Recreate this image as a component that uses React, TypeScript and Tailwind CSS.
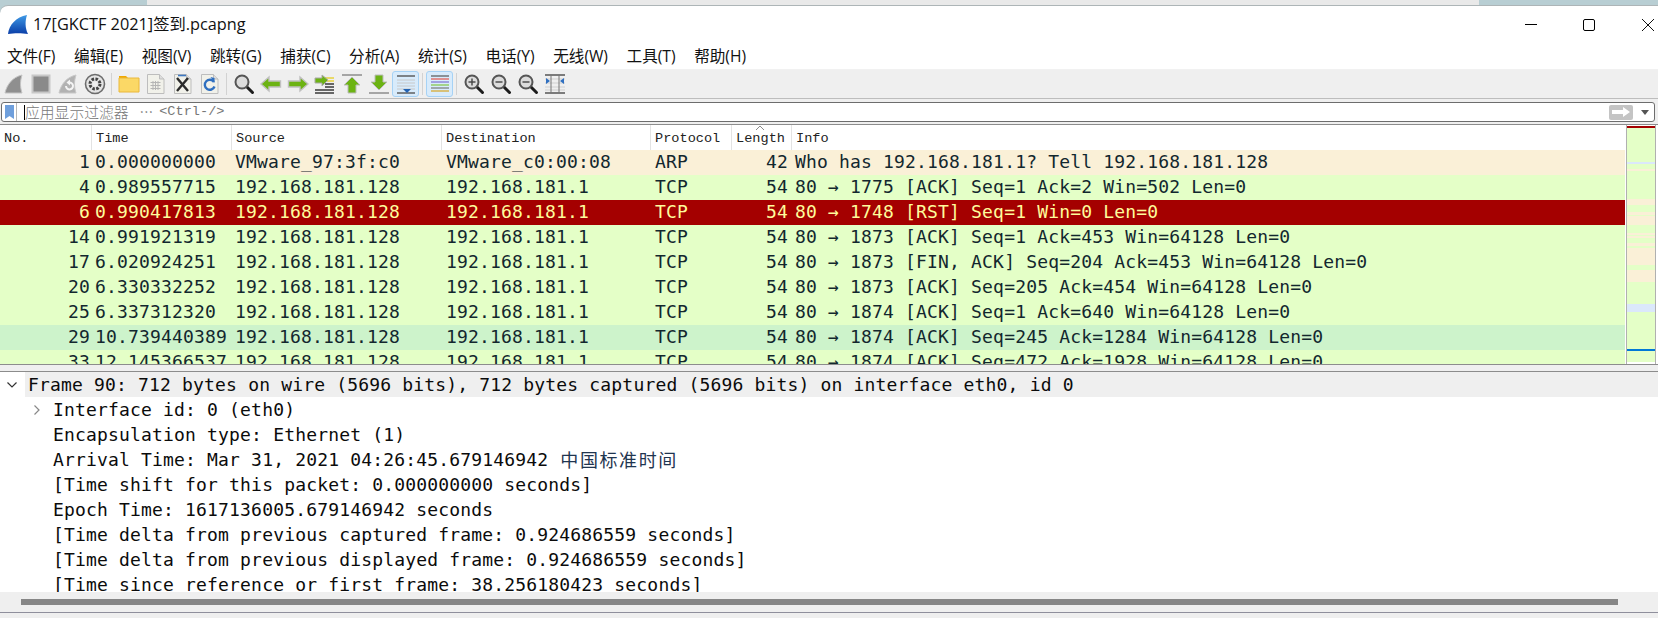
const menus = ['文件(F)', '编辑(E)', '视图(V)', '跳转(G)', '捕获(C)', '分析(A)', '统计(S)', '电话(Y)', '无线(W)', '工具(T)', '帮助(H)']

const columns = [
  { label: 'No.', width: 'w-[92px]' },
  { label: 'Time', width: 'w-[140px]' },
  { label: 'Source', width: 'w-[210px]' },
  { label: 'Destination', width: 'w-[209px]' },
  { label: 'Protocol', width: 'w-[81px]' },
  { label: 'Length', width: 'w-[60px]' },
]

const packets = [
  { no: 1, time: '0.000000000', src: 'VMware_97:3f:c0', dst: 'VMware_c0:00:08', proto: 'ARP', len: 42, info: 'Who has 192.168.181.1? Tell 192.168.181.128', row: 'bg-[#faf0d7] text-[#12272e]' },
  { no: 4, time: '0.989557715', src: '192.168.181.128', dst: '192.168.181.1', proto: 'TCP', len: 54, info: '80 → 1775 [ACK] Seq=1 Ack=2 Win=502 Len=0', row: 'bg-[#e4ffc7] text-[#12272e]' },
  { no: 6, time: '0.990417813', src: '192.168.181.128', dst: '192.168.181.1', proto: 'TCP', len: 54, info: '80 → 1748 [RST] Seq=1 Win=0 Len=0', row: 'bg-[#a40000] text-[#fffc9c]' },
  { no: 14, time: '0.991921319', src: '192.168.181.128', dst: '192.168.181.1', proto: 'TCP', len: 54, info: '80 → 1873 [ACK] Seq=1 Ack=453 Win=64128 Len=0', row: 'bg-[#e4ffc7] text-[#12272e]' },
  { no: 17, time: '6.020924251', src: '192.168.181.128', dst: '192.168.181.1', proto: 'TCP', len: 54, info: '80 → 1873 [FIN, ACK] Seq=204 Ack=453 Win=64128 Len=0', row: 'bg-[#e4ffc7] text-[#12272e]' },
  { no: 20, time: '6.330332252', src: '192.168.181.128', dst: '192.168.181.1', proto: 'TCP', len: 54, info: '80 → 1873 [ACK] Seq=205 Ack=454 Win=64128 Len=0', row: 'bg-[#e4ffc7] text-[#12272e]' },
  { no: 25, time: '6.337312320', src: '192.168.181.128', dst: '192.168.181.1', proto: 'TCP', len: 54, info: '80 → 1874 [ACK] Seq=1 Ack=640 Win=64128 Len=0', row: 'bg-[#e4ffc7] text-[#12272e]' },
  { no: 29, time: '10.739440389', src: '192.168.181.128', dst: '192.168.181.1', proto: 'TCP', len: 54, info: '80 → 1874 [ACK] Seq=245 Ack=1284 Win=64128 Len=0', row: 'bg-[#cdf3cb] text-[#12272e]' },
  { no: 33, time: '12.145366537', src: '192.168.181.128', dst: '192.168.181.1', proto: 'TCP', len: 54, info: '80 → 1874 [ACK] Seq=472 Ack=1928 Win=64128 Len=0', row: 'bg-[#e4ffc7] text-[#12272e]' },
]

// minimap stripes: height in px, colour
const stripes: [number, string][] = [
  [2, '#a40000'], [34, '#e4ffc7'], [2, '#dbe8fb'], [5, '#e4ffc7'], [2, '#faf0d7'], [28, '#e4ffc7'], [6, '#faf0d7'], [7, '#e4ffc7'],
  [3, '#faf0d7'], [1, '#e4ffc7'], [9, '#faf0d7'], [8, '#e4ffc7'], [2, '#faf0d7'], [1, '#e4ffc7'], [2, '#faf0d7'], [5, '#e4ffc7'],
  [3, '#faf0d7'], [2, '#e4ffc7'], [17, '#faf0d7'], [5, '#e4ffc7'], [3, '#faf0d7'], [9, '#faf0d7'], [22, '#e4ffc7'], [8, '#dbe8fb'],
  [37, '#e4ffc7'], [2, '#0078d7'], [11, '#e4ffc7'], [2, '#ffffff'],
]

const details = [
  'Interface id: 0 (eth0)',
  'Encapsulation type: Ethernet (1)',
  'Arrival Time: Mar 31, 2021 04:26:45.679146942',
  '[Time shift for this packet: 0.000000000 seconds]',
  'Epoch Time: 1617136005.679146942 seconds',
  '[Time delta from previous captured frame: 0.924686559 seconds]',
  '[Time delta from previous displayed frame: 0.924686559 seconds]',
  '[Time since reference or first frame: 38.256180423 seconds]',
]

function Icon({ children }: { children: React.ReactNode }) {
  return (
    <svg width="22" height="22" viewBox="0 0 22 22" fill="none">
      {children}
    </svg>
  )
}

function Lens({ sign }: { sign?: 'plus' | 'minus' }) {
  return (
    <Icon>
      <path d="M13.5 13.5l6 6" stroke="#1c1c1c" strokeWidth="3" strokeLinecap="round" />
      <circle cx="9" cy="9" r="6.5" fill="#dcdcdc" stroke="#555" strokeWidth="2" />
      {sign && <path d="M5.5 9h7" stroke="#444" strokeWidth="1.4" />}
      {sign === 'plus' && <path d="M9 5.5v7" stroke="#444" strokeWidth="1.4" />}
    </Icon>
  )
}

function Arrow({ dir }: { dir: 'left' | 'right' }) {
  return (
    <Icon>
      <path
        d={dir === 'left' ? 'M1 11l8-7v4h11.5v6H9v4z' : 'M21 11l-8-7v4H1.5v6H13v4z'}
        fill="#6cb313"
        stroke="#c0c0c0"
        strokeWidth="1.4"
      />
    </Icon>
  )
}

function Doc({ children }: { children?: React.ReactNode }) {
  return (
    <Icon>
      <path d="M2.5 1.5h12l4.5 4.5v14.5H2.5z" fill="#f1f1ea" stroke="#bdbdbd" />
      <path d="M14.5 1.5V6H19" fill="#dddddd" stroke="#bdbdbd" />
      {children}
    </Icon>
  )
}

const toolbar: (React.ReactNode | 'sep')[] = [
  <Icon><path d="M2 20C4 11 10 4 19 2c-2 6-2 12 0 18z" fill="#8f8f8f" stroke="#c4c4c4" /></Icon>,
  <Icon><rect x="2.5" y="2.5" width="17" height="17" fill="#8a8a8a" stroke="#c8c8c8" strokeWidth="2" /></Icon>,
  <Icon>
    <path d="M2 20C4 11 10 4 19 2c-2 6-2 12 0 18z" fill="#b2b2b2" stroke="#c8c8c8" />
    <path d="M9 13a3.5 3.5 0 1 0 3-3.5" stroke="#f4f4f4" strokeWidth="2" />
    <path d="M13 6.5v6l-3.5-3z" fill="#f4f4f4" />
  </Icon>,
  <Icon>
    <circle cx="11" cy="11" r="9.5" fill="#e4e4e4" stroke="#6c6c6c" strokeWidth="1.6" />
    <circle cx="11" cy="11" r="5" fill="none" stroke="#444" strokeWidth="3" strokeDasharray="2.5 1.4" />
    <circle cx="11" cy="11" r="2.4" fill="#efefef" />
  </Icon>,
  'sep',
  <Icon>
    <path d="M1 5V3h7l2 2z" fill="#f0a800" />
    <path d="M1 5h20v14H1z" fill="#fbd866" stroke="#eab83a" />
  </Icon>,
  <Doc>
    <path d="M5.5 9.5h10M5.5 12.5h10M5.5 15.5h10M8 8v9M10.5 8v9M13 8v9" stroke="#b5b5b5" />
  </Doc>,
  <Doc>
    <path d="M5 5l11 13M16 5L5 18" stroke="#2b2b2b" strokeWidth="2.4" />
    <path d="M6 2.5h8" stroke="#3f78c2" strokeWidth="1.6" />
  </Doc>,
  <Doc>
    <path d="M15 9a5 5 0 1 0 .5 4.5" stroke="#2f6fc0" strokeWidth="2.4" />
    <path d="M11.5 4l4 1v5z" fill="#2f6fc0" />
  </Doc>,
  'sep',
  <Lens />,
  <Arrow dir="left" />,
  <Arrow dir="right" />,
  <Icon>
    <path d="M11 5h9M13 8h7" stroke="#e8d23c" strokeWidth="1.6" />
    <path d="M11 11h9M11 14h9M1 17h19M1 20h19" stroke="#3a3a3a" strokeWidth="1.4" />
    <path d="M14 7l-6-5v3H1v5h7v3z" fill="#6cb313" stroke="#a9a9a9" />
  </Icon>,
  <Icon>
    <path d="M1 2h20" stroke="#a5a5a5" strokeWidth="2" />
    <path d="M11 4l8 8h-4v8H7v-8H3z" fill="#6cb313" stroke="#bcbcbc" />
  </Icon>,
  <Icon>
    <path d="M1 20h20" stroke="#a5a5a5" strokeWidth="2" />
    <path d="M11 17l8-8h-4V2H7v7H3z" fill="#6cb313" stroke="#bcbcbc" />
  </Icon>,
  'auto',
  'sep',
  'color',
  'sep',
  <Lens sign="plus" />,
  <Lens sign="minus" />,
  <Lens sign="minus" />,
  <Icon>
    <path d="M1 2h20M1 20h20" stroke="#555" strokeWidth="1.4" />
    <path d="M1 6h20M1 10h20M1 14h20M1 17h20" stroke="#cfcfcf" />
    <path d="M7 2v18M15 2v18" stroke="#777" />
    <path d="M2 5l4 3-4 3zM20 5l-4 3 4 3z" fill="#2f6fc0" />
  </Icon>,
]

function ToolButton({ item }: { item: React.ReactNode | 'sep' }) {
  if (item === 'sep') {
    return (
      <div className="w-[7px] flex justify-center">
        <div className="w-px h-[22px] bg-[#d2d2d2]"></div>
      </div>
    )
  }
  if (item === 'auto') {
    return (
      <div className="w-[27px] h-[26px] rounded-[3px] border border-[#a6d2f5] bg-[#d8ebfb] flex items-center justify-center">
        <svg width="20" height="20" viewBox="0 0 20 20" fill="none">
          <path d="M1 2h18" stroke="#555" strokeWidth="1.4" />
          <path d="M1 6h18M1 9h18M1 12h18M1 15h18" stroke="#c8c8c8" />
          <path d="M1 19h18" stroke="#555" strokeWidth="1.4" />
          <path d="M7 15h8l-4 4z" fill="#2464b4" />
        </svg>
      </div>
    )
  }
  if (item === 'color') {
    return (
      <div className="w-[27px] h-[26px] rounded-[3px] border border-[#a6d2f5] bg-[#d8ebfb] flex items-center justify-center">
        <svg width="20" height="20" viewBox="0 0 20 20" fill="none">
          <path d="M1 2h18" stroke="#555" strokeWidth="1.2" />
          <path d="M1 5h18" stroke="#e2574c" strokeWidth="1.2" />
          <path d="M1 8h18" stroke="#7c6fd0" strokeWidth="1.2" />
          <path d="M1 11h18" stroke="#82c341" strokeWidth="1.2" />
          <path d="M1 14h18" stroke="#777" strokeWidth="1.2" />
          <path d="M1 17h18" stroke="#d9a520" strokeWidth="1.2" />
        </svg>
      </div>
    )
  }
  return <div className="w-[27px] flex justify-center">{item}</div>
}

export default function App() {
  const mono = "font-['DejaVu_Sans_Mono',monospace] text-[18px] tracking-[0.17px]"

  return (
    <div className="w-[1658px] h-[618px] overflow-hidden flex flex-col bg-[#b8ced3] font-['Open_Sans','Noto_Sans_CJK_SC',sans-serif]">
      {/* strip of the window behind this one */}
      <div className="h-[5px] shrink-0 ml-[147px] mr-[179px] bg-[#e9e9e9]"></div>

      <div className="flex-1 min-h-0 flex flex-col bg-white rounded-tl-[8px] border-t border-[#adb5b7]">
        {/* title bar */}
        <div className="h-[40px] shrink-0 flex items-center pl-[8px] pb-[3px]">
          <svg width="20" height="20" viewBox="0 0 20 20">
            <defs>
              <linearGradient id="fin" x1="0" y1="0" x2="0" y2="1">
                <stop offset="0" stopColor="#3f9ae6" />
                <stop offset="1" stopColor="#0a3ea8" />
              </linearGradient>
            </defs>
            <path d="M0 19C1 10 8 2 19 0c-2 6-2 13 1 19-6-1-14-1-20 0z" fill="url(#fin)" />
          </svg>
          <span className="ml-[5px] text-[16.3px] text-[#111] font-['Open_Sans','Noto_Sans_CJK_SC',sans-serif]">17[GKCTF 2021]签到.pcapng</span>
          <div className="ml-auto flex items-center">
            <div className="w-[12px] h-px bg-black mr-[46px]"></div>
            <div className="w-[12px] h-[12px] rounded-[2px] border border-black mr-[47px]"></div>
            <svg className="mr-[4px]" width="12" height="12" viewBox="0 0 12 12" fill="none">
              <path d="M0 0l12 12M12 0L0 12" stroke="#111" />
            </svg>
          </div>
        </div>

        {/* menu bar */}
        <div className="h-[23px] shrink-0 flex items-center gap-[18.6px] pl-[7px] pb-[1px] text-[15.6px] text-[#111]">
          {menus.map((m) => (
            <span key={m}>{m}</span>
          ))}
        </div>
        <div className="h-px shrink-0 bg-[#f1f1f1]"></div>

        {/* main toolbar */}
        <div className="h-[29px] shrink-0 bg-[#efefef] flex items-center border-b border-[#bdbdbd]">
          {toolbar.map((item, i) => (
            <ToolButton key={i} item={item} />
          ))}
        </div>

        {/* display filter */}
        <div className="h-[26px] shrink-0 bg-[#efefef] border-b border-[#8c8c8c] pt-[3px] pr-[3px] pl-[1px]">
          <div className="h-[20px] bg-white border border-[#6d6d6d] rounded-[3px] flex items-center">
            <div className="w-[15px] h-full flex items-center justify-center border-r border-[#b8b8b8]">
              <svg width="9" height="14" viewBox="0 0 9 14">
                <path d="M0 0h9v14L4.5 11 0 14z" fill="#6f9fdc" />
              </svg>
            </div>
            <div className="w-px h-[15px] ml-[7px] bg-black"></div>
            <span className="text-[14.8px] text-[#777] font-['Noto_Sans_CJK_SC',sans-serif] font-light leading-none">应用显示过滤器</span>
            <span className="ml-[11px] text-[13.6px] text-[#777] font-['Noto_Sans_CJK_SC',sans-serif] leading-none">⋯</span>
            <span className="ml-[6px] text-[13.6px] text-[#777] font-['Liberation_Mono',monospace] whitespace-pre">&lt;Ctrl-/&gt;</span>
            <div className="ml-auto w-[24px] h-[15px] mr-[8px] rounded-[2px] bg-[#c4c4c4] flex items-center justify-center">
              <svg width="18" height="10" viewBox="0 0 18 10">
                <path d="M0 3h11V0l7 5-7 5V7H0z" fill="#fff" />
              </svg>
            </div>
            <svg className="mr-[5px]" width="8" height="5" viewBox="0 0 8 5">
              <path d="M0 0h8L4 5z" fill="#555" />
            </svg>
          </div>
        </div>

        {/* packet list + minimap */}
        <div className="h-[240px] shrink-0 flex border-b border-[#8c8c8c]">
          <div className="w-[1625px] shrink-0 flex flex-col overflow-hidden">
            <div className="h-[25px] shrink-0 flex bg-white text-[13.6px] text-[#222] font-['Liberation_Mono',monospace]">
              {columns.map((c) => (
                <div key={c.label} className={`${c.width} relative shrink-0 border-r border-[#e3e3e3] pl-[4px] pt-[4px]`}>
                  {c.label}
                  {c.label === 'Length' && (
                    <svg className="absolute left-[22px] top-0" width="12" height="6" viewBox="0 0 12 6" fill="none">
                      <path d="M2 5l4-4 4 4" stroke="#8a8a8a" />
                    </svg>
                  )}
                </div>
              ))}
              <div className="flex-1 pl-[4px] pt-[4px]">Info</div>
            </div>
            {packets.map((p) => (
              <div key={p.no} className={`h-[25px] shrink-0 flex items-center pb-[2px] whitespace-pre ${mono} ${p.row}`}>
                <div className="w-[90px] shrink-0 text-right">{p.no}</div>
                <div className="w-[142px] shrink-0 pl-[5px]">{p.time}</div>
                <div className="w-[210px] shrink-0 pl-[3px]">{p.src}</div>
                <div className="w-[209px] shrink-0 pl-[4px]">{p.dst}</div>
                <div className="w-[81px] shrink-0 pl-[4px]">{p.proto}</div>
                <div className="w-[56px] shrink-0 text-right">{p.len}</div>
                <div className="flex-1 pl-[7px]">{p.info}</div>
              </div>
            ))}
          </div>
          <div className="flex-1 border-x border-[#b0b0b0] mr-[2px] ml-px overflow-hidden pt-px bg-white">
            {stripes.map(([h, color], i) => (
              <div key={i} style={{ height: h, backgroundColor: color }}></div>
            ))}
          </div>
        </div>

        {/* splitter */}
        <div className="h-[7px] shrink-0 bg-[#efefef] border-b border-[#8c8c8c]"></div>

        {/* packet details */}
        <div className={`h-[220px] shrink-0 overflow-hidden whitespace-pre text-[#0b0b0b] ${mono}`}>
          <div className="h-[25px] flex items-center">
            <svg className="ml-[7px] mr-[8px]" width="10" height="6" viewBox="0 0 10 6" fill="none">
              <path d="M0.5 0.5L5 5l4.5-4.5" stroke="#333" strokeWidth="1.2" />
            </svg>
            <div className="flex-1 h-full flex items-center pl-[3px] bg-[#efefef]">
              Frame 90: 712 bytes on wire (5696 bits), 712 bytes captured (5696 bits) on interface eth0, id 0
            </div>
          </div>
          {details.map((d, i) => (
            <div key={d} className="h-[25px] flex items-center pl-[53px] relative">
              {i === 0 && (
                <svg className="absolute left-[34px] top-[8px]" width="6" height="10" viewBox="0 0 6 10" fill="none">
                  <path d="M0.5 0.5L5 5 0.5 9.5" stroke="#888" strokeWidth="1.2" />
                </svg>
              )}
              {d}
              {i === 2 && (
                <span className="ml-[12px] text-[18px] text-[#1f3550] font-['Noto_Sans_CJK_SC',serif] tracking-[1.6px]">中国标准时间</span>
              )}
            </div>
          ))}
        </div>

        {/* horizontal scrollbar */}
        <div className="h-[20px] shrink-0 bg-[#efefef] flex items-center pl-[21px]">
          <div className="w-[1597px] h-[6px] bg-[#868686]"></div>
        </div>
        <div className="h-px shrink-0 bg-[#8f8f9c]"></div>
        <div className="flex-1 bg-[#efefef]"></div>
      </div>
    </div>
  )
}
